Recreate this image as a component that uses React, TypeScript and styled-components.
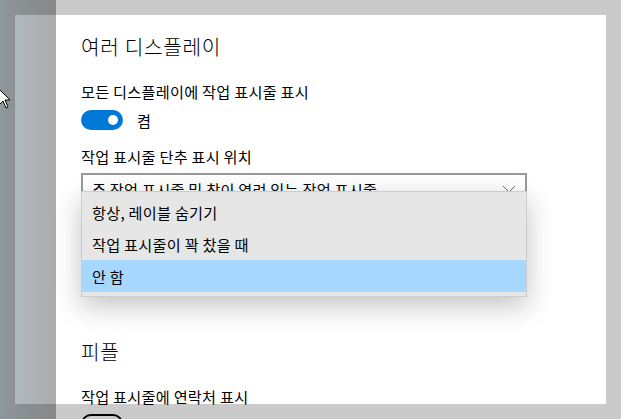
import React from "react";
import styled, { createGlobalStyle } from "styled-components";

const Global = createGlobalStyle`
  html, body { margin: 0; padding: 0; width: 621px; height: 419px; overflow: hidden; background: #fff; }
  * { box-sizing: border-box; }
  body { font-family: "Noto Sans CJK KR", "Noto Sans", sans-serif; color: #000; }
`;

const Window = styled.div`
  position: relative;
  width: 621px;
  height: 419px;
  display: flex;
  overflow: hidden;
`;

const Nav = styled.div`
  width: 56px;
  flex: none;
  background: linear-gradient(to right, #b5c0c5 0px, #b1b8bc 15px, #acacad 56px);
`;

const Main = styled.main`
  flex: 1;
  background: #fff;
  padding: 33px 0 0 25px;
  display: flex;
  flex-direction: column;
`;

const Heading = styled.h2<{ $gap?: number }>`
  margin: ${(p) => p.$gap ?? 0}px 0 0;
  font-size: 20.2px;
  font-weight: 300;
  letter-spacing: 0.7px;
  line-height: 28px;
  color: #000;
`;

const Label = styled.div<{ $gap: number }>`
  margin-top: ${(p) => p.$gap}px;
  font-size: 15.2px;
  letter-spacing: 0.25px;
  line-height: 20px;
`;

const ToggleRow = styled.div<{ $gap: number }>`
  margin-top: ${(p) => p.$gap}px;
  display: flex;
  align-items: center;
  gap: 14px;
  height: 20px;
  font-size: 15.2px;
`;

const Toggle = styled.div<{ $on: boolean }>`
  position: relative;
  width: 42px;
  height: 20px;
  border-radius: 10px;
  background: ${(p) => (p.$on ? "#0078d7" : "transparent")};
  border: ${(p) => (p.$on ? "none" : "2px solid #000")};
  display: flex;
  align-items: center;
  justify-content: ${(p) => (p.$on ? "flex-end" : "flex-start")};
  padding: 0 5px;
`;

const Knob = styled.span<{ $on: boolean }>`
  width: 10px;
  height: 10px;
  border-radius: 50%;
  background: ${(p) => (p.$on ? "#fff" : "#000")};
`;

const ComboWrap = styled.div`
  position: relative;
  margin-top: 7px;
  width: 446px;
`;

const Combo = styled.div`
  height: 32px;
  border: 2px solid #999;
  display: flex;
  align-items: center;
  padding: 0 9px;
  font-size: 15.2px;
  letter-spacing: 0.25px;
  background: #fff;
`;

const ComboText = styled.span`
  flex: 1;
  white-space: nowrap;
  overflow: hidden;
`;

const Dropdown = styled.ul`
  position: absolute;
  top: 18px;
  left: 0;
  right: 0;
  margin: 0;
  padding: 4px 0;
  list-style: none;
  background: #e6e6e6;
  border: 1px solid #cccccc;
  box-shadow: 0 9px 26px rgba(0, 0, 0, 0.24);
`;

const Item = styled.li<{ $selected?: boolean }>`
  height: 32px;
  display: flex;
  align-items: center;
  padding-left: 10px;
  font-size: 15.2px;
  letter-spacing: 0.25px;
  background: ${(p) => (p.$selected ? "#a6d8ff" : "transparent")};
`;

const Dim = styled.div`
  position: absolute;
  left: 15px;
  top: 15px;
  width: 591px;
  height: 389px;
  box-shadow: 0 0 0 2000px rgba(0, 0, 0, 0.208);
  pointer-events: none;
`;

const Cursor = styled.svg`
  position: absolute;
  left: -2px;
  top: 88px;
`;

export default function App() {
  return (
    <>
      <Global />
      <Window>
        <Nav />
        <Main>
          <Heading>여러 디스플레이</Heading>
          <Label $gap={20}>모든 디스플레이에 작업 표시줄 표시</Label>
          <ToggleRow $gap={9}>
            <Toggle $on>
              <Knob $on />
            </Toggle>
            <span>켬</span>
          </ToggleRow>
          <Label $gap={16}>작업 표시줄 단추 표시 위치</Label>
          <ComboWrap>
            <Combo>
              <ComboText>주 작업 표시줄 및 창이 열려 있는 작업 표시줄</ComboText>
              <svg width="14" height="8" viewBox="0 0 14 8">
                <path d="M1 1 L7 7 L13 1" fill="none" stroke="#666" strokeWidth="1" />
              </svg>
            </Combo>
            <Dropdown>
              <Item>항상, 레이블 숨기기</Item>
              <Item>작업 표시줄이 꽉 찼을 때</Item>
              <Item $selected>안 함</Item>
            </Dropdown>
          </ComboWrap>
          <Heading $gap={133}>피플</Heading>
          <Label $gap={20}>작업 표시줄에 연락처 표시</Label>
          <ToggleRow $gap={8}>
            <Toggle $on={false}>
              <Knob $on={false} />
            </Toggle>
          </ToggleRow>
        </Main>
        <Dim />
        <Cursor width="13" height="21" viewBox="0 0 13 21">
          <path
            d="M1 1 L1 17 L5 13 L8 20 L10 19 L7 12 L12 12 Z"
            fill="#fff"
            stroke="#000"
            strokeWidth="1"
            strokeLinejoin="miter"
          />
        </Cursor>
      </Window>
    </>
  );
}
